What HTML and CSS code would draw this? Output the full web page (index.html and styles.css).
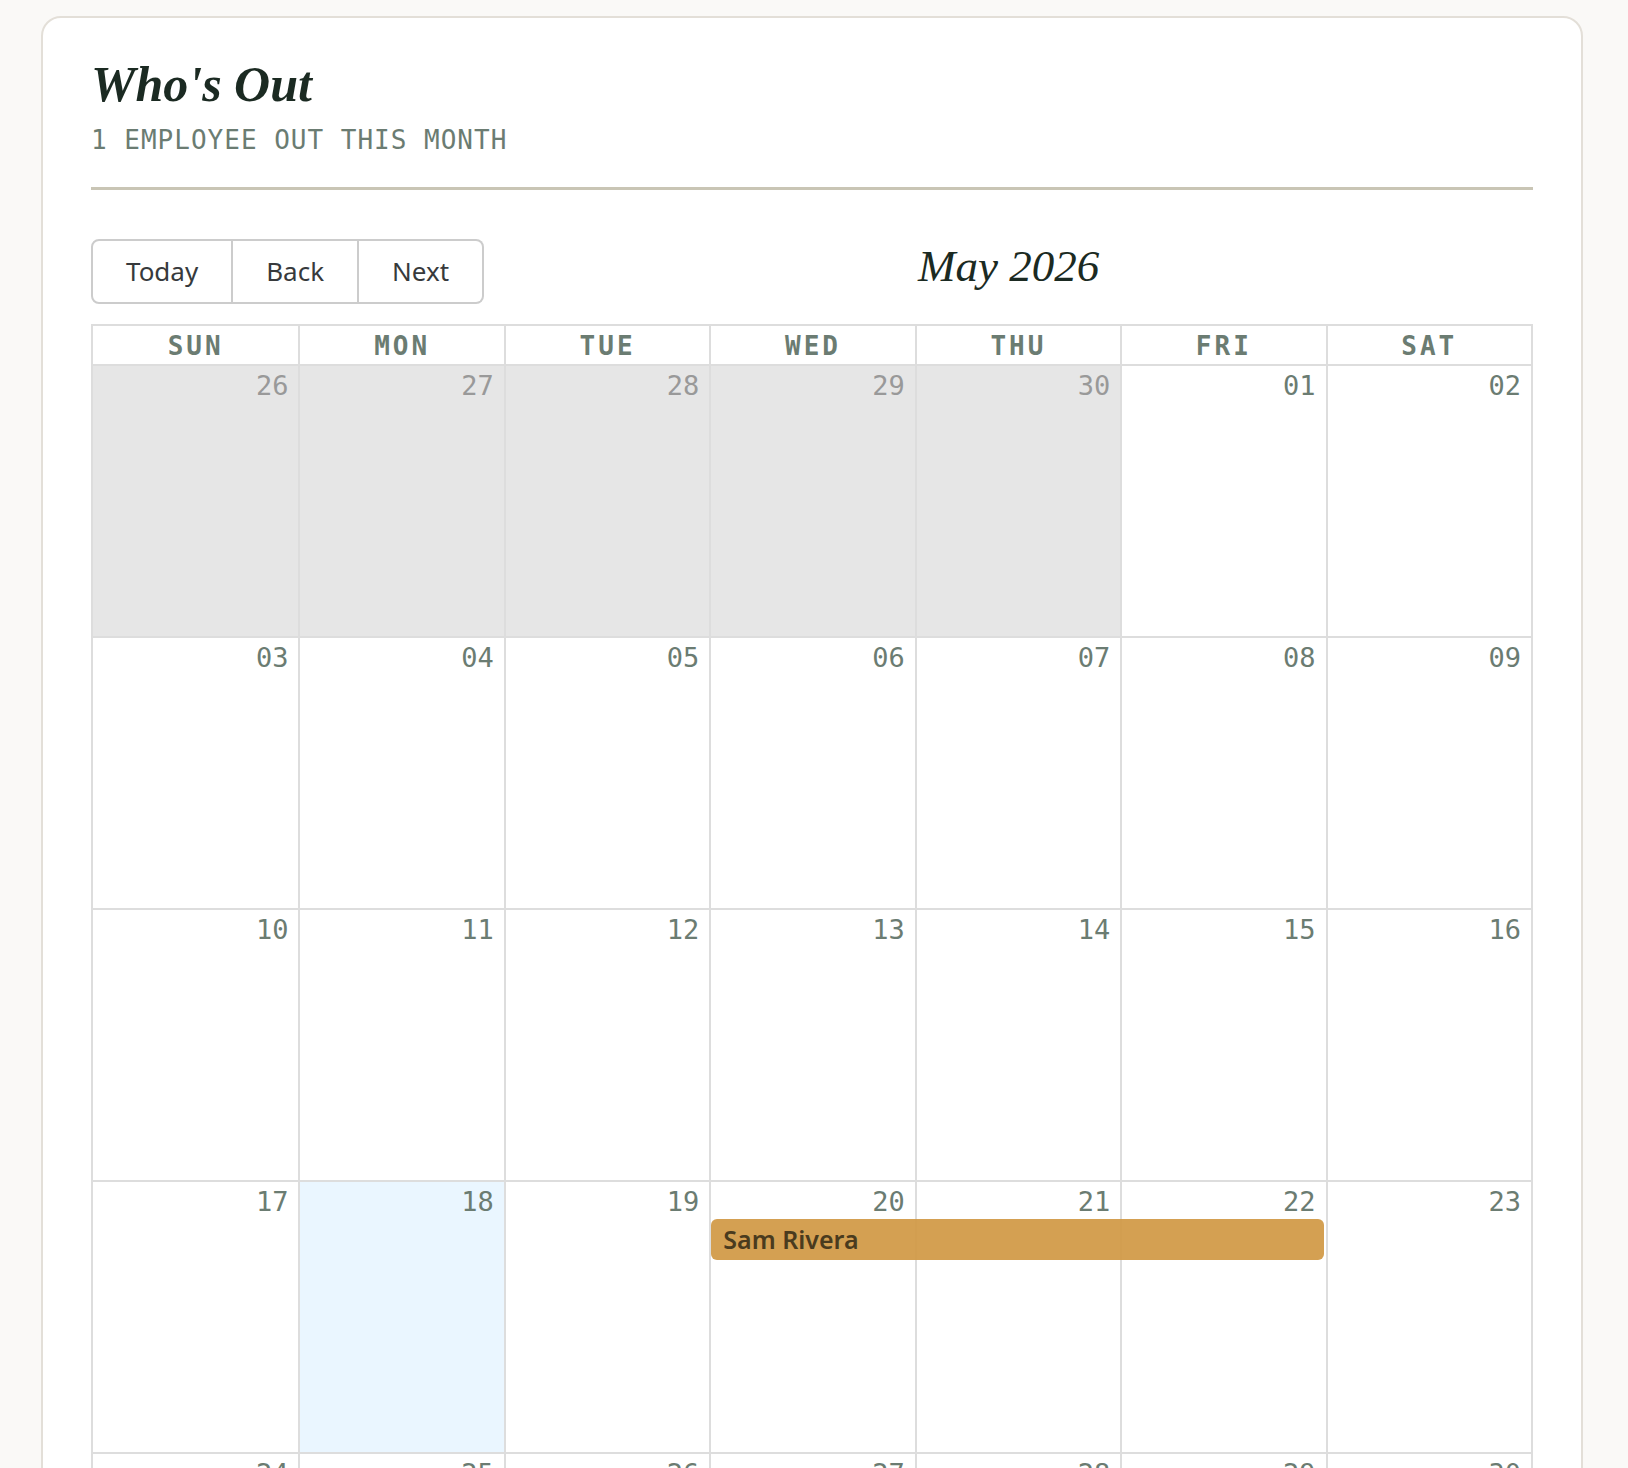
FILE: index.html
```html
<!DOCTYPE html>
<html lang="en">
<head>
<meta charset="utf-8">
<title>Who's Out</title>
<link rel="stylesheet" href="styles.css">
</head>
<body>
<div class="page">
  <section class="card">
    <header class="card-header">
      <h1 class="title">Who's Out</h1>
      <p class="subtitle">1 employee out this month</p>
    </header>

    <div class="toolbar">
      <div class="btn-group">
        <button class="btn" type="button">Today</button>
        <button class="btn" type="button">Back</button>
        <button class="btn" type="button">Next</button>
      </div>
      <div class="toolbar-label">May 2026</div>
    </div>

    <div class="month">
      <div class="month-header">
        <div class="hcell">Sun</div>
        <div class="hcell">Mon</div>
        <div class="hcell">Tue</div>
        <div class="hcell">Wed</div>
        <div class="hcell">Thu</div>
        <div class="hcell">Fri</div>
        <div class="hcell">Sat</div>
      </div>

      <div class="week">
        <div class="week-bg">
          <div class="day off"></div><div class="day off"></div><div class="day off"></div><div class="day off"></div><div class="day off"></div><div class="day"></div><div class="day"></div>
        </div>
        <div class="week-content">
          <div class="date off">26</div><div class="date off">27</div><div class="date off">28</div><div class="date off">29</div><div class="date off">30</div><div class="date">01</div><div class="date">02</div>
        </div>
      </div>

      <div class="week">
        <div class="week-bg">
          <div class="day"></div><div class="day"></div><div class="day"></div><div class="day"></div><div class="day"></div><div class="day"></div><div class="day"></div>
        </div>
        <div class="week-content">
          <div class="date">03</div><div class="date">04</div><div class="date">05</div><div class="date">06</div><div class="date">07</div><div class="date">08</div><div class="date">09</div>
        </div>
      </div>

      <div class="week">
        <div class="week-bg">
          <div class="day"></div><div class="day"></div><div class="day"></div><div class="day"></div><div class="day"></div><div class="day"></div><div class="day"></div>
        </div>
        <div class="week-content">
          <div class="date">10</div><div class="date">11</div><div class="date">12</div><div class="date">13</div><div class="date">14</div><div class="date">15</div><div class="date">16</div>
        </div>
      </div>

      <div class="week">
        <div class="week-bg">
          <div class="day"></div><div class="day today"></div><div class="day"></div><div class="day"></div><div class="day"></div><div class="day"></div><div class="day"></div>
        </div>
        <div class="week-content">
          <div class="date">17</div><div class="date">18</div><div class="date">19</div><div class="date">20</div><div class="date">21</div><div class="date">22</div><div class="date">23</div>
          <div class="event span-wed-fri">Sam Rivera</div>
        </div>
      </div>

      <div class="week">
        <div class="week-bg">
          <div class="day"></div><div class="day"></div><div class="day"></div><div class="day"></div><div class="day"></div><div class="day"></div><div class="day"></div>
        </div>
        <div class="week-content">
          <div class="date">24</div><div class="date">25</div><div class="date">26</div><div class="date">27</div><div class="date">28</div><div class="date">29</div><div class="date">30</div>
        </div>
      </div>

      <div class="week">
        <div class="week-bg">
          <div class="day"></div><div class="day off"></div><div class="day off"></div><div class="day off"></div><div class="day off"></div><div class="day off"></div><div class="day off"></div>
        </div>
        <div class="week-content">
          <div class="date">31</div><div class="date off">01</div><div class="date off">02</div><div class="date off">03</div><div class="date off">04</div><div class="date off">05</div><div class="date off">06</div>
        </div>
      </div>
    </div>
  </section>
</div>
</body>
</html>
```

FILE: styles.css
```css
html {
  scrollbar-width: none;
}

body {
  margin: 0;
  background: #faf9f7;
  font-family: "Noto Sans", "Liberation Sans", sans-serif;
  color: #373a3c;
}

.page {
  padding: 16px 45px 40px 41px;
}

.card {
  background: #ffffff;
  border: 2px solid #e3dfd8;
  border-radius: 20px;
  padding: 36px 48px 48px;
}

.card-header {
  padding-bottom: 31px;
  border-bottom: 3px solid #c9c5b5;
}

.title {
  margin: 0;
  font-family: "Liberation Serif", "DejaVu Serif", serif;
  font-style: italic;
  font-weight: 700;
  font-size: 50px;
  line-height: 60px;
  color: #1b2a22;
}

.subtitle {
  margin: 10px 0 0;
  font-family: "DejaVu Sans Mono", "Liberation Mono", monospace;
  font-size: 26px;
  line-height: 32px;
  letter-spacing: 1px;
  text-transform: uppercase;
  color: #6b7c72;
}

.toolbar {
  display: flex;
  align-items: flex-start;
  margin-top: 49px;
  margin-bottom: 20px;
}

.btn-group {
  display: inline-flex;
}

.btn {
  margin: 0;
  font-family: "Noto Sans", "Liberation Sans", sans-serif;
  font-size: 26px;
  line-height: 39px;
  color: #373a3c;
  background: #ffffff;
  border: 2px solid #cccccc;
  padding: 11px 33px;
  border-radius: 0;
}

.btn + .btn {
  border-left: none;
}

.btn:first-child {
  border-radius: 8px 0 0 8px;
}

.btn:last-child {
  border-radius: 0 8px 8px 0;
}

.toolbar-label {
  flex: 1;
  text-align: center;
  padding: 0 10px;
  margin-top: 7px;
  font-family: "Liberation Serif", "DejaVu Serif", serif;
  font-style: italic;
  font-size: 45px;
  line-height: 40px;
  color: #1b2a22;
}

.month {
  border: 2px solid #dddddd;
}

.month-header {
  display: grid;
  grid-template-columns: repeat(7, 1fr);
  border-bottom: 2px solid #dddddd;
}

.hcell {
  padding: 4px 0 1px;
  line-height: 33px;
  text-align: center;
  font-family: "DejaVu Sans Mono", "Liberation Mono", monospace;
  font-weight: 700;
  font-size: 26px;
  letter-spacing: 3px;
  text-transform: uppercase;
  color: #6b7c72;
}

.hcell + .hcell {
  border-left: 2px solid #dddddd;
}

.week {
  display: grid;
  height: 270px;
  border-bottom: 2px solid #dddddd;
}

.week-bg,
.week-content {
  grid-area: 1 / 1;
  display: grid;
  grid-template-columns: repeat(7, 1fr);
}

.week-content {
  align-content: start;
}

.day {
  background: #ffffff;
}

.day + .day {
  border-left: 2px solid #dddddd;
}

.day.off {
  background: #e6e6e6;
}

.day.today {
  background: #eaf6ff;
}

.date {
  padding: 4px 10px 0 0;
  text-align: right;
  font-family: "DejaVu Sans Mono", "Liberation Mono", monospace;
  font-size: 27px;
  line-height: 31px;
  color: #6b7c72;
}

.date.off {
  color: #999999;
}

.event {
  margin: 2px 2px 0;
  padding: 4px 12px;
  border-radius: 6px;
  background: rgba(208, 152, 67, 0.92);
  font-family: "Noto Sans", "Liberation Sans", sans-serif;
  font-weight: 600;
  font-size: 25px;
  line-height: 33px;
  color: #4a3b1e;
}

.span-wed-fri {
  grid-column: 4 / 7;
}
```
